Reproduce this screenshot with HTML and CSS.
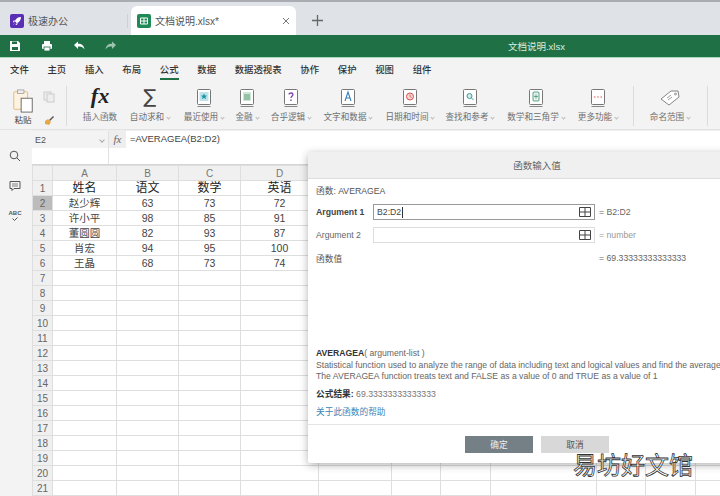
FILE: index.html
```html
<!DOCTYPE html>
<html lang="zh">
<head>
<meta charset="utf-8">
<title>文档说明.xlsx</title>
<link rel="stylesheet" href="styles.css">
</head>
<body>
<div class="app">
  <div class="tabbar">
    <div class="home-tab">
      <svg class="tab-icon" viewBox="0 0 14 14"><rect width="14" height="14" rx="2" fill="#5b2fb5"/><path d="M11 3C8 3 6 4.500 4.800 7.200l2 2C9.500 8 11 6 11 3z" fill="#fff"/><path d="M4.500 6.500L3 7.500l1 .7zM7.500 9.500L6.500 11l-.7-1zM4.500 9.500l-1 1" fill="#fff" stroke="#fff" stroke-width=".5"/></svg>
      <span>极速办公</span>
    </div>
    <div class="tab-sep"></div>
    <div class="doc-tab">
      <svg class="tab-icon" viewBox="0 0 14 14"><rect width="14" height="14" rx="2" fill="#1f8a55"/><path d="M3.500 4h7v6h-7zM3.500 7h7M7 4v6" fill="none" stroke="#fff" stroke-width="1"/></svg>
      <span class="doc-name">文档说明.xlsx*</span>
      <svg class="close" viewBox="0 0 8 8"><path d="M1 1l6 6M7 1L1 7" stroke="#777" stroke-width="1" fill="none"/></svg>
    </div>
    <svg class="plus" viewBox="0 0 10 10"><path d="M5 0v10M0 5h10" stroke="#666" stroke-width="1.2" fill="none"/></svg>
  </div>

  <div class="titlebar">
    <div class="quick">
      <svg viewBox="0 0 12 12"><path d="M1 1h8l2 2v8H1z" fill="#fff"/><rect x="3" y="1.500" width="5" height="2.500" fill="#1f7145"/><rect x="3" y="7" width="6" height="3" fill="#1f7145"/></svg>
      <svg viewBox="0 0 12 12"><rect x="3" y="1" width="6" height="3" fill="#fff"/><rect x="1" y="4" width="10" height="5" rx="1" fill="#fff"/><rect x="3" y="7" width="6" height="4" fill="#fff" stroke="#1f7145" stroke-width=".8"/></svg>
      <svg viewBox="0 0 12 12"><path d="M1 5l4-3.500v2.200c4 0 6 2 6.500 5.800-1.500-2.500-3.500-3-6.500-3V9z" fill="#fff"/></svg>
      <svg viewBox="0 0 12 12"><path d="M11 5L7 1.500v2.200c-4 0-6 2-6.500 5.800C2 7 4 6.500 7 6.500V9z" fill="#9cc4ae"/></svg>
    </div>
    <div class="doc-title">文档说明.xlsx</div>
  </div>

  <nav class="menu">
    <span>文件</span><span>主页</span><span>插入</span><span>布局</span><span class="active">公式</span><span>数据</span><span>数据透视表</span><span>协作</span><span>保护</span><span>视图</span><span>组件</span>
  </nav>

  <div class="ribbon">
    <div class="paste-group">
      <div class="paste">
        <svg viewBox="0 0 22 26" class="paste-icon"><rect x="1" y="3" width="15" height="19" rx="1" fill="#fdf3e0" stroke="#e0b878"/><rect x="5" y="1" width="7" height="4" fill="#eee" stroke="#999" stroke-width=".8"/><rect x="9" y="10" width="12" height="15" fill="#fff" stroke="#666"/></svg>
        <span>粘贴</span>
      </div>
      <div class="paste-side">
        <svg viewBox="0 0 12 12"><rect x="1" y="1" width="7" height="8" fill="#eee" stroke="#ccc"/><rect x="4" y="3" width="7" height="8" fill="#eee" stroke="#ccc"/></svg>
        <svg viewBox="0 0 12 12"><path d="M6 6l4-4 1 1-4 4z" fill="#555"/><path d="M2 7l3-2 3 3-2 3-4-1z" fill="#e7a84a"/></svg>
      </div>
    </div>
    <div class="rib-sep"></div>
    <div class="rib-item w-fx"><span class="big-fx">fx</span><span class="lbl">插入函数</span></div>
    <div class="rib-item w-sum"><span class="big-sum">∑</span><span class="lbl">自动求和<i></i></span></div>
    <div class="rib-item w-recent"><svg class="book" viewBox="0 0 14 18"><rect x=".5" y=".5" width="13" height="15" rx="1" fill="#fff" stroke="#777"/><path d="M.5 17.500h13" stroke="#888"/><rect x="2.500" y="3" width="9" height="9" fill="#bfe3e8"/><path d="M7 4.500l1 2h2l-1.500 1.500.5 2L7 9l-2 1 .5-2L4 6.500h2z" fill="#1a9aa8"/></svg><span class="lbl">最近使用<i></i></span></div>
    <div class="rib-item w-fin"><svg class="book" viewBox="0 0 14 18"><rect x=".5" y=".5" width="13" height="15" rx="1" fill="#fff" stroke="#777"/><path d="M.5 17.500h13" stroke="#888"/><rect x="3" y="3" width="8" height="9" fill="#cfe6d5"/><path d="M4 6h6M4 8h6M4 10h6" stroke="#3d8c5f" stroke-width=".8"/></svg><span class="lbl">金融<i></i></span></div>
    <div class="rib-item w-logic"><svg class="book" viewBox="0 0 14 18"><rect x=".5" y=".5" width="13" height="15" rx="1" fill="#fff" stroke="#777"/><path d="M.5 17.500h13" stroke="#888"/><path d="M5 5.500c0-2 4-2 4 0 0 1.500-2 1.500-2 3.500M7 10.500v1.500" stroke="#7a3fb0" stroke-width="1.300" fill="none"/></svg><span class="lbl">合乎逻辑<i></i></span></div>
    <div class="rib-item w-text"><svg class="book" viewBox="0 0 14 18"><rect x=".5" y=".5" width="13" height="15" rx="1" fill="#fff" stroke="#777"/><path d="M.5 17.500h13" stroke="#888"/><path d="M4 12l3-9 3 9M5 9h4" stroke="#3a7fb8" stroke-width="1.100" fill="none"/></svg><span class="lbl">文字和数据<i></i></span></div>
    <div class="rib-item w-date"><svg class="book" viewBox="0 0 14 18"><rect x=".5" y=".5" width="13" height="15" rx="1" fill="#fff" stroke="#777"/><path d="M.5 17.500h13" stroke="#888"/><circle cx="7" cy="7.500" r="3.500" fill="#f7d5d5" stroke="#d9534f"/><path d="M7 5.500v2l1.500 1" stroke="#d9534f" stroke-width=".8" fill="none"/></svg><span class="lbl">日期和时间<i></i></span></div>
    <div class="rib-item w-find"><svg class="book" viewBox="0 0 14 18"><rect x=".5" y=".5" width="13" height="15" rx="1" fill="#fff" stroke="#777"/><path d="M.5 17.500h13" stroke="#888"/><circle cx="6.500" cy="7" r="2.500" fill="#d5ecec" stroke="#3a9a9a"/><path d="M8.500 9l2 2" stroke="#3a9a9a"/></svg><span class="lbl">查找和参考<i></i></span></div>
    <div class="rib-item w-math"><svg class="book" viewBox="0 0 14 18"><rect x=".5" y=".5" width="13" height="15" rx="1" fill="#fff" stroke="#777"/><path d="M.5 17.500h13" stroke="#888"/><rect x="4" y="3" width="6" height="9" rx="1" fill="#e3f2ea" stroke="#3d8c6f" stroke-width=".8"/><path d="M5 7.500h4M7 5.500v4" stroke="#3d8c6f" stroke-width=".7"/></svg><span class="lbl">数学和三角学<i></i></span></div>
    <div class="rib-item w-more"><svg class="book" viewBox="0 0 14 18"><rect x=".5" y=".5" width="13" height="15" rx="1" fill="#fff" stroke="#777"/><path d="M.5 17.500h13" stroke="#888"/><path d="M3 8h1.500M6.200 8h1.500M9.500 8H11" stroke="#d9534f" stroke-width="1.200"/></svg><span class="lbl">更多功能<i></i></span></div>
    <div class="rib-sep sep-name"></div>
    <div class="rib-item w-name"><svg class="tag" viewBox="0 0 20 16"><path d="M1 9l10-8h7l1 6-10 8z" fill="#fff" stroke="#777" stroke-width=".9"/><path d="M7 8l4-3M8 10l4-3" stroke="#888" stroke-width=".8"/><circle cx="15.500" cy="4" r="1" fill="none" stroke="#777" stroke-width=".8"/></svg><span class="lbl">命名范围<i></i></span></div>
    <div class="rib-sep sep-end"></div>
  </div>

  <div class="main">
    <aside class="sidebar">
      <svg viewBox="0 0 12 12"><circle cx="5" cy="5" r="3.800" fill="none" stroke="#555"/><path d="M8 8l3 3" stroke="#555"/></svg>
      <svg viewBox="0 0 12 12"><path d="M1 1.500h10v7H5l-2 2v-2H1z" fill="none" stroke="#555"/><path d="M3 4h6M3 6h6" stroke="#555" stroke-width=".7"/></svg>
      <div class="spell">
        <span class="abc">ABC</span>
        <svg viewBox="0 0 8 4"><path d="M1.500 1.500l2 2 3-3" fill="none" stroke="#555"/></svg>
      </div>
    </aside>
    <div class="sheet">
      <div class="formula">
        <div class="name-col">
          <div class="name-box"><span>E2</span><i></i></div>
        </div>
        <span class="fx-btn">fx</span>
        <div class="formula-text">=AVERAGEA(B2:D2)</div>
      </div>
      <table class="grid">
        <colgroup>
          <col class="c-h"><col class="c-a"><col class="c-b"><col class="c-c"><col class="c-d"><col class="c-e"><col class="c-f"><col class="c-g"><col class="c-k"><col class="c-f"><col class="c-g"><col class="c-z">
        </colgroup>
        <tr class="head"><th class="corner"></th><th>A</th><th>B</th><th>C</th><th>D</th><th></th><th></th><th></th><th></th><th></th><th></th><th></th></tr>
        <tr class="title"><th>1</th><td>姓名</td><td>语文</td><td>数学</td><td>英语</td><td></td><td></td><td></td><td></td><td></td><td></td><td></td></tr>
        <tr><th class="sel">2</th><td>赵少辉</td><td>63</td><td>73</td><td>72</td><td></td><td></td><td></td><td></td><td></td><td></td><td></td></tr>
        <tr><th>3</th><td>许小平</td><td>98</td><td>85</td><td>91</td><td></td><td></td><td></td><td></td><td></td><td></td><td></td></tr>
        <tr><th>4</th><td>董圆圆</td><td>82</td><td>93</td><td>87</td><td></td><td></td><td></td><td></td><td></td><td></td><td></td></tr>
        <tr><th>5</th><td>肖宏</td><td>94</td><td>95</td><td>100</td><td></td><td></td><td></td><td></td><td></td><td></td><td></td></tr>
        <tr><th>6</th><td>王晶</td><td>68</td><td>73</td><td>74</td><td></td><td></td><td></td><td></td><td></td><td></td><td></td></tr>
        <tr><th>7</th><td></td><td></td><td></td><td></td><td></td><td></td><td></td><td></td><td></td><td></td><td></td></tr>
        <tr><th>8</th><td></td><td></td><td></td><td></td><td></td><td></td><td></td><td></td><td></td><td></td><td></td></tr>
        <tr><th>9</th><td></td><td></td><td></td><td></td><td></td><td></td><td></td><td></td><td></td><td></td><td></td></tr>
        <tr><th>10</th><td></td><td></td><td></td><td></td><td></td><td></td><td></td><td></td><td></td><td></td><td></td></tr>
        <tr><th>11</th><td></td><td></td><td></td><td></td><td></td><td></td><td></td><td></td><td></td><td></td><td></td></tr>
        <tr><th>12</th><td></td><td></td><td></td><td></td><td></td><td></td><td></td><td></td><td></td><td></td><td></td></tr>
        <tr><th>13</th><td></td><td></td><td></td><td></td><td></td><td></td><td></td><td></td><td></td><td></td><td></td></tr>
        <tr><th>14</th><td></td><td></td><td></td><td></td><td></td><td></td><td></td><td></td><td></td><td></td><td></td></tr>
        <tr><th>15</th><td></td><td></td><td></td><td></td><td></td><td></td><td></td><td></td><td></td><td></td><td></td></tr>
        <tr><th>16</th><td></td><td></td><td></td><td></td><td></td><td></td><td></td><td></td><td></td><td></td><td></td></tr>
        <tr><th>17</th><td></td><td></td><td></td><td></td><td></td><td></td><td></td><td></td><td></td><td></td><td></td></tr>
        <tr><th>18</th><td></td><td></td><td></td><td></td><td></td><td></td><td></td><td></td><td></td><td></td><td></td></tr>
        <tr><th>19</th><td></td><td></td><td></td><td></td><td></td><td></td><td></td><td></td><td></td><td></td><td></td></tr>
        <tr><th>20</th><td></td><td></td><td></td><td></td><td></td><td></td><td></td><td></td><td></td><td></td><td></td></tr>
        <tr><th>21</th><td></td><td></td><td></td><td></td><td></td><td></td><td></td><td></td><td></td><td></td><td></td></tr>
      </table>
    </div>
  </div>
</div>

<section class="dialog">
  <header class="dlg-head">函数输入值</header>
  <div class="dlg-body">
    <div class="fn-name">函数: AVERAGEA</div>
    <div class="args">
      <label class="arg-on">Argument 1</label>
      <div class="input focus"><span class="caret">B2:D2</span><svg viewBox="0 0 12 10"><path d="M.5.500h11v9H.5zM6 .5v9M.5 5h11" fill="none" stroke="#444"/></svg></div>
      <span class="val">= B2:D2</span>
      <label>Argument 2</label>
      <div class="input"><span></span><svg viewBox="0 0 12 10"><path d="M.5.500h11v9H.5zM6 .5v9M.5 5h11" fill="none" stroke="#444"/></svg></div>
      <span class="val muted">= number</span>
      <label class="fn-val">函数值</label>
      <span></span>
      <span class="val">= 69.33333333333333</span>
    </div>
    <div class="desc">
      <p><b>AVERAGEA</b>( argument-list )</p>
      <p>Statistical function used to analyze the range of data including text and logical values and find the average</p>
      <p>The AVERAGEA function treats text and FALSE as a value of 0 and TRUE as a value of 1</p>
    </div>
    <div class="result"><b>公式结果:</b> 69.33333333333333</div>
    <a class="help">关于此函数的帮助</a>
  </div>
  <footer class="dlg-foot">
    <button class="ok">确定</button>
    <button class="cancel">取消</button>
  </footer>
</section>

<div class="watermark">易坊好文馆</div>
</body>
</html>
```

FILE: styles.css
```css
* { box-sizing: border-box; }
html, body { margin: 0; height: 100%; overflow: hidden; }
body {
  width: 720px;
  height: 496px;
  position: relative;
  font-family: "Liberation Sans", "Noto Sans CJK SC", sans-serif;
  font-size: 9px;
  color: #444;
  background: #fff;
}
.app { width: 720px; height: 496px; display: flex; flex-direction: column; overflow: hidden; }

/* tab bar */
.tabbar {
  height: 35px;
  flex: none;
  display: flex;
  align-items: flex-end;
  background: #dfe3e7;
  border-top: 2px solid #a9adb1;
}
.home-tab { display: flex; align-items: center; gap: 4px; width: 127px; height: 29px; padding-left: 10px; font-size: 10px; color: #555; }
.tab-icon { width: 14px; height: 14px; flex: none; }
.tab-sep { width: 1px; height: 14px; background: #cdd1d5; margin: 0 3px 7px 0; }
.doc-tab {
  width: 165px;
  height: 29px;
  display: flex;
  align-items: center;
  gap: 4px;
  padding: 0 6px;
  background: #fff;
  border-radius: 6px 6px 0 0;
  font-size: 10px;
  color: #555;
}
.doc-name { flex: 1; }
.close { width: 8px; height: 8px; }
.plus { width: 11px; height: 11px; margin: 0 0 9px 16px; }

/* title bar */
.titlebar {
  height: 23px;
  flex: none;
  display: flex;
  align-items: center;
  background: #1f7145;
  border-bottom: 1px solid #a8d8bd;
}
.quick { display: flex; gap: 20px; padding-left: 9px; width: 360px; }
.quick svg { width: 12px; height: 12px; }
.doc-title { width: 205px; text-align: right; font-size: 9.5px; color: #d8ece0; }

/* menu */
.menu {
  height: 22px;
  flex: none;
  display: flex;
  align-items: stretch;
  gap: 18.7px;
  padding: 0 0 1px 10px;
  background: #f3f3f3;
  font-size: 9.4px;
  font-weight: 500;
  color: #333;
}
.menu span { display: flex; align-items: center; }
.menu .active { box-shadow: 0 1px 0 #1f7145, inset 0 -1px 0 #1f7145; }

/* ribbon */
.ribbon {
  height: 50px;
  flex: none;
  display: flex;
  background: #f3f3f3;
  border-bottom: 1px solid #e3e3e3;
  color: #707070;
}
.paste-group { width: 66px; display: flex; padding: 9px 0 0 12px; gap: 9px; }
.paste { display: flex; flex-direction: column; align-items: center; gap: 1px; color: #444; font-size: 8.5px; line-height: 12px; }
.paste-icon { width: 22px; height: 24px; }
.paste-side { display: flex; flex-direction: column; gap: 11px; padding-top: 2px; }
.paste-side svg { width: 12px; height: 12px; }
.rib-sep { width: 1px; height: 40px; margin-top: 6px; background: #dcdcdc; flex: none; }
.sep-name { margin-left: 13px; margin-right: 7px; }
.sep-end { margin-left: 8px; }
.rib-item { display: flex; flex-direction: column; align-items: center; justify-content: flex-end; padding-bottom: 7px; flex: none; height: 50px; }
.lbl { font-size: 8.6px; line-height: 12px; white-space: nowrap; display: flex; align-items: center; gap: 3px; }
.lbl i { width: 3px; height: 3px; border-right: 1px solid #bbb; border-bottom: 1px solid #bbb; transform: rotate(45deg); }
.book { width: 14px; height: 18px; margin-bottom: 4px; }
.tag { width: 20px; height: 16px; margin-bottom: 5px; }
.big-fx { font-family: "Liberation Serif", serif; font-style: italic; font-weight: 700; font-size: 22px; line-height: 22px; color: #222; margin-bottom: 4px; }
.big-sum { font-family: "DejaVu Sans", sans-serif; font-size: 19px; line-height: 22px; color: #444; margin-bottom: 4px; }
.w-fx { width: 48px; margin-left: 9px; }
.w-sum { width: 52px; }
.w-recent { width: 56px; }
.w-fin { width: 30px; }
.w-logic { width: 58px; }
.w-text { width: 56px; }
.w-date { width: 68px; }
.w-find { width: 52px; }
.w-math { width: 80px; }
.w-more { width: 44px; }
.w-name { width: 58px; }

/* main */
.main { flex: 1; display: flex; min-height: 0; }
.sidebar {
  width: 32px;
  flex: none;
  background: #f3f3f3;
  display: flex;
  flex-direction: column;
  align-items: flex-start;
  gap: 18px;
  padding: 20px 0 0 9px;
}
.sidebar svg { width: 12px; height: 12px; }
.spell { display: flex; flex-direction: column; align-items: center; width: 12px; }
.abc { font-size: 6px; font-weight: 700; color: #555; line-height: 7px; }
.sidebar .spell svg { width: 8px; height: 4px; }
.sheet { flex: 1; min-width: 0; }

.formula { height: 35px; display: flex; background: #fff; border-bottom: 1px solid #d5d5d5; border-top: 1px solid #eee; }
.name-col { width: 77px; border-right: 1px solid #e2e2e2; }
.name-box { height: 17px; display: flex; align-items: center; justify-content: space-between; padding: 0 4px 0 3px; background: #f3f3f3; font-size: 9px; color: #555; }
.name-box i { width: 4px; height: 4px; border-right: 1px solid #aaa; border-bottom: 1px solid #aaa; transform: rotate(45deg); }
.fx-btn { width: 17px; height: 17px; text-align: center; font-family: "Liberation Serif", serif; font-style: italic; font-size: 11px; line-height: 17px; background: #eee; color: #666; flex: none; }
.formula-text { height: 17px; line-height: 16px; padding-left: 4px; font-size: 9.5px; color: #444; }

.grid { border-collapse: collapse; table-layout: fixed; width: 688px; }
.c-h { width: 20px; } .c-a { width: 64px; } .c-b { width: 62px; } .c-c { width: 62px; }
.c-d { width: 78px; } .c-e { width: 73px; } .c-f { width: 49px; } .c-g { width: 50px; }
.c-k { width: 106px; } .c-z { width: 25px; }
.grid tr { height: 15px; }
.grid th, .grid td { padding: 0; border: 1px solid #dedede; text-align: center; font-weight: 400; line-height: 13px; height: 15px; overflow: hidden; white-space: nowrap; }
.grid th { background: #f0f0f0; color: #666; font-size: 10px; }
.grid td { font-size: 10.5px; color: #444; }
.head th { color: #777; }
.corner { background: #ececec; }
.title td { font-size: 12px; color: #222; }
.sel.sel { background: #bcbcbc; }

/* dialog */
.dialog {
  position: absolute;
  left: 308px;
  top: 152px;
  width: 458px;
  height: 311px;
  display: flex;
  flex-direction: column;
  background: #fff;
  border-radius: 2px;
  box-shadow: 0 2px 8px rgba(0,0,0,.3);
  font-size: 8.7px;
}
.dlg-head { height: 27px; flex: none; display: flex; align-items: center; justify-content: center; background: #f0f0f0; border-bottom: 1px solid #ddd; font-size: 9.5px; color: #666; }
.dlg-body { flex: 1; min-height: 0; padding: 6px 0 0 8px; }
.fn-name { line-height: 12px; height: 12px; color: #555; }
.args { display: grid; grid-template-columns: 57px 222px auto; grid-auto-rows: 16px; row-gap: 7px; margin-top: 7px; align-items: center; }
.args label { color: #666; }
.args .arg-on { font-weight: 700; color: #444; }
.args .fn-val { color: #555; }
.input { height: 16px; border: 1px solid #ddd; display: flex; align-items: center; justify-content: space-between; padding: 0 3px; color: #444; }
.input.focus { border-color: #999; }
.input svg { width: 12px; height: 10px; }
.caret { border-right: 1px solid #333; padding-right: 1px; line-height: 11px; }
.val { padding-left: 4px; color: #666; }
.muted { color: #999; }
.desc { margin-top: 82px; line-height: 11.5px; color: #666; font-size: 8.65px; }
.desc p { margin: 0; white-space: nowrap; }
.desc b { color: #333; }
.result { margin-top: 5px; color: #777; line-height: 12px; }
.result b { color: #333; }
.help { display: block; margin-top: 6px; color: #3a86b8; line-height: 12px; }
.dlg-foot { height: 39px; flex: none; display: flex; justify-content: center; gap: 8px; padding-top: 11px; border-top: 1px solid #e4e4e4; }
.dlg-foot button { width: 68px; height: 17px; border: 0; padding: 0; font: inherit; }
.ok { background: #747f86; color: #eee; }
.cancel { background: #d8d8d8; color: #555; }

/* overlay caption */
.watermark {
  position: absolute;
  left: 573px;
  top: 449px;
  font-size: 24px;
  line-height: 30px;
  color: #fff;
  font-family: "Noto Sans CJK SC", sans-serif;
  -webkit-text-stroke: .8px #333;
  white-space: nowrap;
}
```
